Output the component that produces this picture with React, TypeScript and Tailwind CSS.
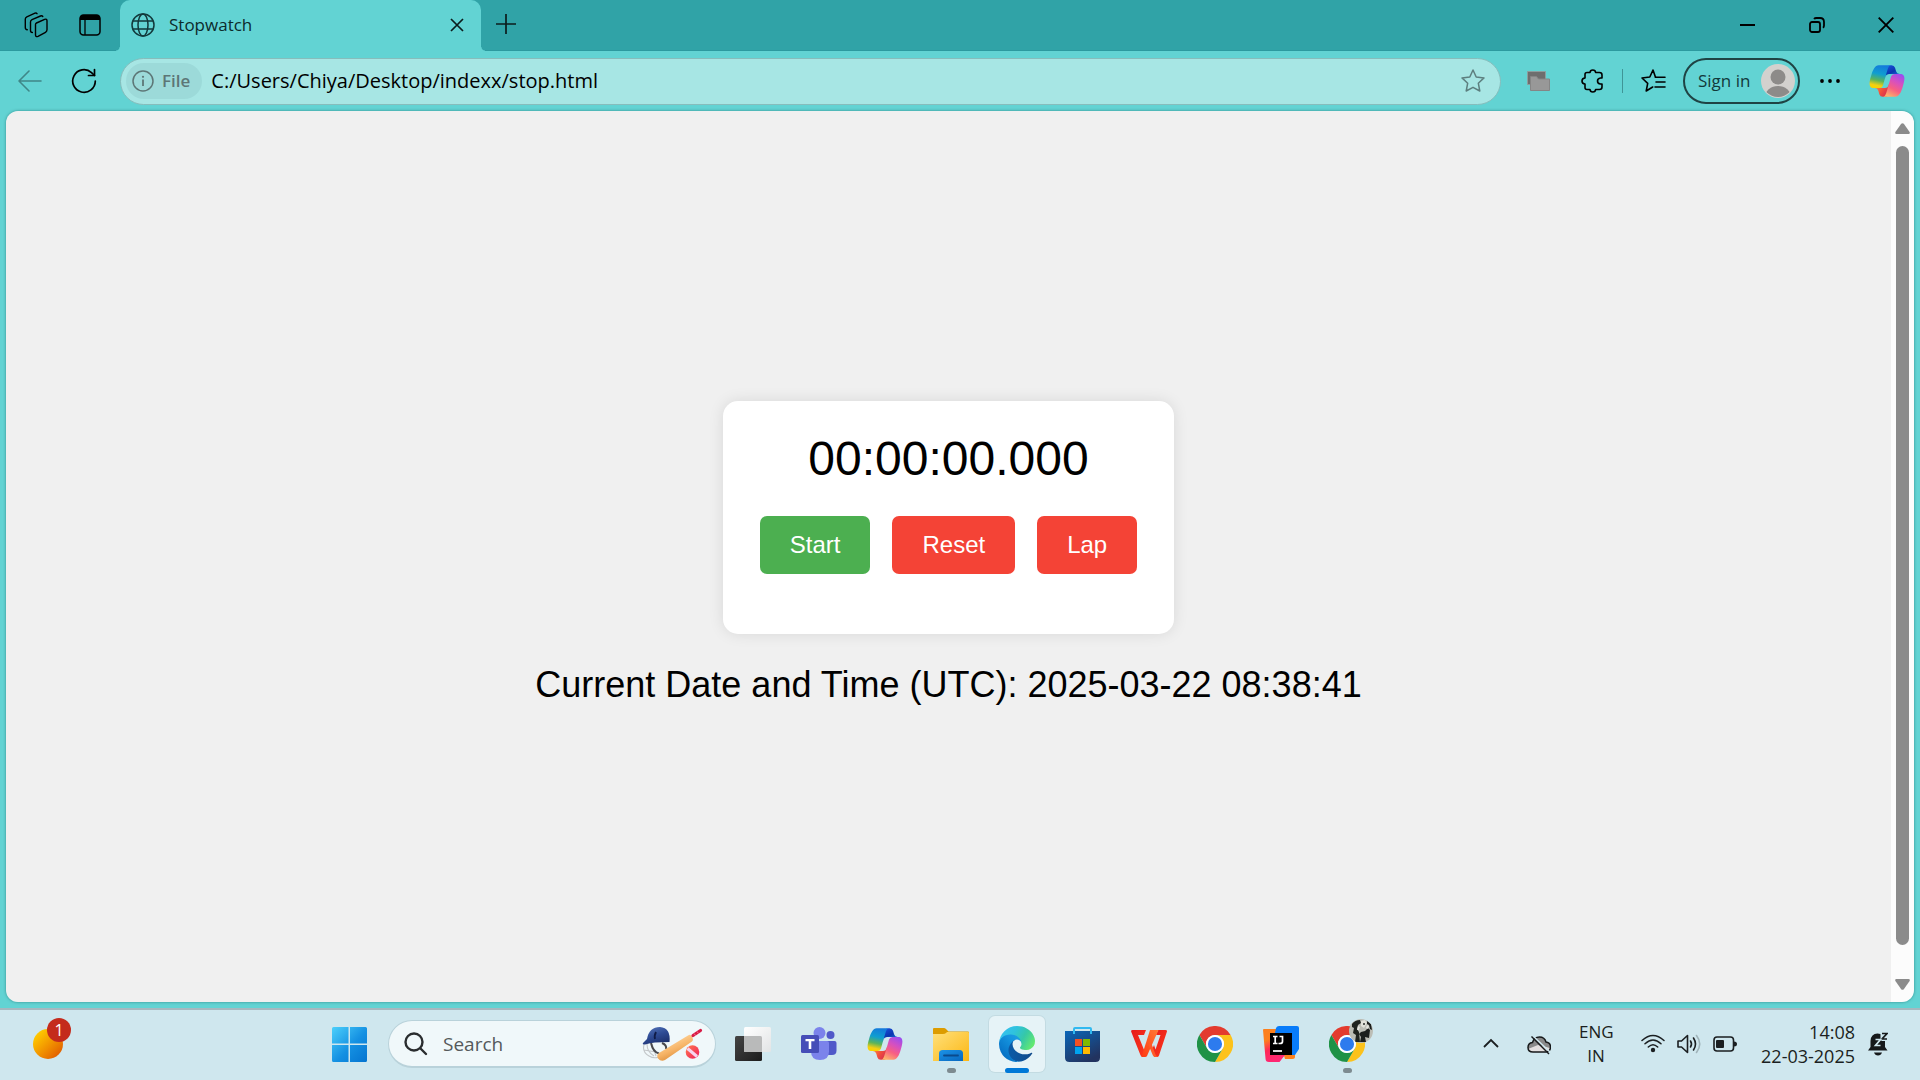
import type { ReactNode } from "react";

const UI_FONT = "font-['Open_Sans','Noto_Sans',sans-serif]";

function CopilotIcon({ id }: { id: string }) {
  return (
    <svg width="38" height="38" viewBox="0 0 48 48" aria-hidden="true">
      <defs>
        <linearGradient id={id + "a"} x1="0.2" y1="0" x2="0.8" y2="1">
          <stop offset="0" stopColor="#1b4fd8" />
          <stop offset="0.5" stopColor="#0a35b0" />
          <stop offset="1" stopColor="#1b7fe6" />
        </linearGradient>
        <linearGradient id={id + "b"} x1="0" y1="0" x2="1" y2="0.6">
          <stop offset="0" stopColor="#ffa43a" />
          <stop offset="0.6" stopColor="#f2503c" />
          <stop offset="1" stopColor="#d9304f" />
        </linearGradient>
        <linearGradient id={id + "c"} x1="0.6" y1="0" x2="0.4" y2="1">
          <stop offset="0" stopColor="#1478dc" />
          <stop offset="0.4" stopColor="#0f9ed0" />
          <stop offset="0.68" stopColor="#5bb45a" />
          <stop offset="0.9" stopColor="#f5cf12" />
          <stop offset="1" stopColor="#f8d400" />
        </linearGradient>
        <linearGradient id={id + "d"} x1="0.8" y1="0" x2="0.3" y2="1">
          <stop offset="0" stopColor="#9a4df0" />
          <stop offset="0.35" stopColor="#d650c0" />
          <stop offset="0.65" stopColor="#f85f82" />
          <stop offset="1" stopColor="#fdb46a" />
        </linearGradient>
      </defs>
      <path fill={`url(#${id}a)`} d="M34.142 7.325A4.63 4.63 0 0 0 29.7 4h-1.35a4.63 4.63 0 0 0-4.554 3.794L21.48 20.407l.575-1.965a4.63 4.63 0 0 1 4.444-3.33h7.853l3.294 1.282 3.175-1.283h-.926a4.63 4.63 0 0 1-4.443-3.325l-1.31-4.461Z" />
      <path fill={`url(#${id}b)`} d="M14.33 40.656A4.63 4.63 0 0 0 18.779 44h2.87a4.63 4.63 0 0 0 4.629-4.51l.312-12.163-.654 2.233a4.63 4.63 0 0 1-4.443 3.329h-7.919l-2.823-1.531-3.057 1.531h.912a4.63 4.63 0 0 1 4.447 3.344l1.279 4.423Z" />
      <path fill={`url(#${id}c)`} d="M29.5 4H13.46c-4.583 0-7.332 6.057-9.165 12.113C2.123 23.29-.72 32.885 7.503 32.885h6.925a4.63 4.63 0 0 0 4.456-3.358 2078.617 2078.617 0 0 1 4.971-17.156c.843-2.843 1.544-5.284 2.621-6.805C27.08 4.714 28.086 4 29.5 4Z" />
      <path fill={`url(#${id}d)`} d="M18.498 44h16.04c4.582 0 7.332-6.058 9.165-12.115 2.171-7.177 5.013-16.775-3.208-16.775h-6.926a4.63 4.63 0 0 0-4.455 3.358 2084.036 2084.036 0 0 1-4.972 17.16c-.842 2.843-1.544 5.285-2.62 6.806-.604.852-1.61 1.566-3.024 1.566Z" />
    </svg>
  );
}

function ChromeIcon() {
  return (
    <svg width="36" height="36" viewBox="0 0 48 48" aria-hidden="true">
      <path fill="#e33b2e" d="M24 12h20.8A24 24 0 0 0 3.2 12l10.4 18A12 12 0 0 1 24 12Z" />
      <path fill="#fcc21b" d="M44.8 12A24 24 0 0 1 24 48l10.4-18A12 12 0 0 0 24 12Z" />
      <path fill="#1f9246" d="M3.2 12A24 24 0 0 0 24 48l10.4-18a12 12 0 0 1-20.8 0Z" />
      <circle cx="24" cy="24" r="12" fill="#fff" />
      <circle cx="24" cy="24" r="9.4" fill="#2d7bee" />
    </svg>
  );
}

function EdgeIcon() {
  return (
    <svg width="36" height="36" viewBox="0 0 256 256" aria-hidden="true">
      <defs>
        <linearGradient id="edgeA" x1="0.2" y1="0.5" x2="1" y2="0.5">
          <stop offset="0" stopColor="#0c59a4" />
          <stop offset="1" stopColor="#114a8b" />
        </linearGradient>
        <linearGradient id="edgeB" x1="0.9" y1="0.2" x2="0.3" y2="0.9">
          <stop offset="0" stopColor="#1b9de2" />
          <stop offset="0.3" stopColor="#1595df" />
          <stop offset="1" stopColor="#0670c4" />
        </linearGradient>
        <linearGradient id="edgeC" x1="0" y1="0.3" x2="1" y2="0.7">
          <stop offset="0" stopColor="#35c1f1" />
          <stop offset="0.35" stopColor="#2fc2dd" />
          <stop offset="0.65" stopColor="#36c8a6" />
          <stop offset="1" stopColor="#66eb6e" />
        </linearGradient>
      </defs>
      <g transform="translate(-4.63 -4.92)">
        <path fill="url(#edgeA)" d="M235.68 195.46a93.73 93.73 0 0 1-10.54 4.71 101.87 101.87 0 0 1-35.9 6.46c-47.32 0-88.54-32.55-88.54-74.32A31.48 31.48 0 0 1 117.13 105c-42.8 1.8-53.8 46.4-53.8 72.53 0 73.88 68.09 81.37 82.76 81.37 7.91 0 19.84-2.3 27-4.56l1.31-.44a128.34 128.34 0 0 0 66.6-52.8 4 4 0 0 0-5.32-5.64Z" />
        <path fill="url(#edgeB)" d="M110.34 246.34A79.2 79.2 0 0 1 87.6 225a80.72 80.72 0 0 1 29.53-120c3.12-1.47 8.45-4.13 15.54-4a32.35 32.35 0 0 1 25.69 13 31.88 31.88 0 0 1 6.36 18.66c0-.21 24.46-79.6-80-79.6-43.9 0-80 41.66-80 78.21a130.15 130.15 0 0 0 12.11 56 128 128 0 0 0 156.38 67.11 75.55 75.55 0 0 1-62.78-8Z" />
        <path fill="url(#edgeC)" d="M156.94 153.78c-.81 1.05-3.3 2.5-3.3 5.66 0 2.61 1.7 5.12 4.72 7.23 14.38 10 41.49 8.68 41.56 8.68a59.56 59.56 0 0 0 30.27-8.35A61.38 61.38 0 0 0 260.63 114c.26-22.41-8-37.31-11.34-43.91C228.1 28.76 182.35 4.92 132.63 4.92a128 128 0 0 0-128 126.18c.48-36.54 36.8-66.05 80-66.05 3.5 0 23.46.34 42 10.07 16.34 8.58 24.9 18.94 30.85 29.21 6.18 10.67 7.28 24.15 7.28 29.52s-2.74 13.33-7.82 19.93Z" />
      </g>
    </svg>
  );
}

function TabBar() {
  return (
    <header className="flex h-[51px] shrink-0 items-center bg-[#30a3a7] pl-3 shadow-[inset_0_-1px_0_#2c9a9f]">
      <button aria-label="Workspaces" className="flex h-full w-12 items-center justify-center pb-0.5">
        <svg width="26" height="26" viewBox="0 0 26 26" fill="none" stroke="#000" strokeWidth="1.4" strokeLinejoin="round" strokeLinecap="round" aria-hidden="true">
          <path d="M12.500 12.500q0-1 1-1.500L21.600 7.400q2.400-.900 2.400 1.400v9q0 1.700-1.500 2.500l-7.500 4q-2.500 1-2.500-1.500Z" />
          <path d="M9.400 20.500Q7.500 20.500 7.500 18.500V10q0-1.600 1.500-2.300l8.500-3.700q1.500-.600 2.300.5" />
          <path d="M4.300 17.800Q2.300 17.600 2.300 15.500V7q0-1.500 1.500-2.200l8.200-3.600q1.300-.500 2 .5" />
        </svg>
      </button>
      <button aria-label="Tab actions" className="ml-1.5 flex h-full w-12 items-center justify-center pb-0.5">
        <svg width="22" height="22" viewBox="0 0 22 22" fill="none" aria-hidden="true">
          <rect x="1" y="1" width="20" height="20" rx="3.500" stroke="#000" strokeWidth="1.500" />
          <path d="M1 6V4a3 3 0 0 1 3-3h14a3 3 0 0 1 3 3v2Z" fill="#000" />
          <path d="M6 6v15" stroke="#000" strokeWidth="1.300" />
        </svg>
      </button>
      <div className="relative ml-1.5 flex h-full w-[361px] items-center rounded-t-[10px] bg-[#62d3d3] pr-3 pb-0.5 pl-[11px]">
        <span className="absolute bottom-0 -left-1 size-1 bg-[radial-gradient(circle_at_0_0,#30a3a7_3px,#62d3d3_4px)]" />
        <span className="absolute -right-1 bottom-0 size-1 bg-[radial-gradient(circle_at_100%_0,#30a3a7_3px,#62d3d3_4px)]" />
        <svg width="24" height="24" viewBox="0 0 24 24" fill="none" stroke="#12393b" strokeWidth="1.500" aria-hidden="true">
          <circle cx="12" cy="12" r="11" />
          <ellipse cx="12" cy="12" rx="5" ry="11" />
          <path d="M2 8h20M2 16h20" />
        </svg>
        <span className="ml-3.5 text-[17px] leading-6 text-[#0c2b2c]">Stopwatch</span>
        <button aria-label="Close tab" className="ml-auto flex size-6 items-center justify-center">
          <svg width="14" height="14" viewBox="0 0 14 14" stroke="#0b1c1c" strokeWidth="1.700" aria-hidden="true">
            <path d="m1 1 12 12M13 1 1 13" />
          </svg>
        </button>
      </div>
      <button aria-label="New tab" className="ml-[5px] flex h-full w-10 items-center justify-center pb-1">
        <svg width="22" height="22" viewBox="0 0 22 22" stroke="#0b1c1c" strokeWidth="1.700" aria-hidden="true">
          <path d="M11 1v20M1 11h20" />
        </svg>
      </button>
      <div className="ml-auto flex h-full pb-0.5">
        <button aria-label="Minimize" className="flex w-[69px] items-center justify-center">
          <svg width="15" height="15" viewBox="0 0 15 15" aria-hidden="true"><path d="M0 7h15v2H0Z" /></svg>
        </button>
        <button aria-label="Restore" className="flex w-[69px] items-center justify-center">
          <svg width="16" height="16" viewBox="0 0 16 16" fill="none" stroke="#000" strokeWidth="1.800" aria-hidden="true">
            <rect x="1" y="5" width="10" height="10" rx="2" />
            <path d="M5 2q.8-1 2.300-1H11q4 0 4 4v3.500q0 1.500-1 2.300" />
          </svg>
        </button>
        <button aria-label="Close" className="flex w-[69px] items-center justify-center">
          <svg width="16" height="16" viewBox="0 0 16 16" stroke="#000" strokeWidth="1.900" aria-hidden="true">
            <path d="m.7.700 14.600 14.600M15.300.700.7 15.300" />
          </svg>
        </button>
      </div>
    </header>
  );
}

function ToolButton({ label, children }: { label: string; children: ReactNode }) {
  return (
    <button aria-label={label} className="flex size-12 shrink-0 items-center justify-center">
      {children}
    </button>
  );
}

function Toolbar() {
  return (
    <nav className="flex h-[60px] shrink-0 items-center gap-1.5 bg-[#62d3d3] pr-[9px] pl-1.5">
      <ToolButton label="Back">
        <svg width="24" height="22" viewBox="0 0 24 22" fill="none" stroke="#3f8788" strokeWidth="1.600" strokeLinecap="round" strokeLinejoin="round" aria-hidden="true">
          <path d="M23 11H1M11 1 1 11l10 10" />
        </svg>
      </ToolButton>
      <ToolButton label="Refresh">
        <svg width="26" height="26" viewBox="0 0 26 26" fill="none" stroke="#000" strokeWidth="1.700" strokeLinecap="round" strokeLinejoin="round" aria-hidden="true">
          <path d="M24.300 13A11.300 11.300 0 1 1 20.500 4.600L23.500 7.500" />
          <path d="M23.500 1.500v6h-6" />
        </svg>
      </ToolButton>
      <div className="mr-[7px] ml-1.5 flex h-[47px] min-w-0 flex-1 items-center rounded-full border border-[#86bdbc] bg-[#a7e6e4] pr-[15px] pl-[5px]">
        <button className="flex h-9 shrink-0 items-center gap-2 rounded-full bg-[#9cdad9] pr-3 pl-1.5 text-[#5d7676]">
          <svg width="22" height="22" viewBox="0 0 22 22" fill="none" stroke="#5d7676" strokeWidth="1.500" aria-hidden="true">
            <circle cx="11" cy="11" r="10" />
            <path d="M11 9.500V16" strokeWidth="1.800" />
            <circle cx="11" cy="6.800" r="1.100" fill="#5d7676" stroke="none" />
          </svg>
          <span className="text-[17px] leading-6 font-semibold">File</span>
        </button>
        <input aria-label="Address" defaultValue="C:/Users/Chiya/Desktop/indexx/stop.html" className="ml-[9px] min-w-0 flex-1 bg-transparent text-[20px] leading-7 text-black outline-none" />
        <button aria-label="Add to favorites" className="shrink-0">
          <svg width="24" height="24" viewBox="0 0 24 24" fill="none" stroke="#5d7f7f" strokeWidth="1.500" strokeLinejoin="round" aria-hidden="true">
            <path d="m12 1 3.200 7 7.800.900-5.700 5.300 1.500 7.800L12 18.300 5.200 22l1.500-7.800L1 8.900 8.800 8Z" />
          </svg>
        </button>
      </div>
      <ToolButton label="Extension">
        <svg width="23" height="20" viewBox="0 0 23 20" aria-hidden="true">
          <path d="M.500.500h18v13H.500Z" fill="#6e6e6e" stroke="#8d9d9d" />
          <path d="M3.500 5.500h6l2 2.500h11v11.500h-19Z" fill="#989898" stroke="#858585" />
        </svg>
      </ToolButton>
      <ToolButton label="Extensions">
        <svg width="22" height="24" viewBox="0 0 22 24" fill="none" stroke="#000" strokeWidth="1.600" strokeLinejoin="round" aria-hidden="true">
          <path d="M6 3.500h3Q9.200 1 11.800 1t2.800 2.500h3.900Q21 3.500 21 6v3h-1.500q-3 .3-3 3t3 3H21v3q0 2.500-2.500 2.500h-3.900Q14.400 23 11.800 23T9 20.500H6q-2 0-2-2V15q-3-.200-3-3t3-3V5.500q0-2 2-2Z" />
        </svg>
      </ToolButton>
      <span className="h-6 w-px bg-[#3f9597]" />
      <ToolButton label="Favorites">
        <svg width="25" height="24" viewBox="0 0 25 24" fill="none" stroke="#000" strokeWidth="1.600" strokeLinejoin="round" strokeLinecap="round" aria-hidden="true">
          <path d="M14.500 8.200 12 1 8.800 8 1 9l5.700 5.300L5.200 22l6.500-4" />
          <path d="M14.500 8.200h9.500M15 13h9M14 18h10" />
        </svg>
      </ToolButton>
      <button className="flex h-[46px] w-[117px] shrink-0 items-center justify-between rounded-full border-2 border-[#1f4344] pr-[3px] pl-[13px]">
        <span className="text-[17px] leading-6 text-[#12393b]">Sign in</span>
        <svg width="34" height="34" viewBox="0 0 34 34" aria-hidden="true">
          <clipPath id="avatarClip"><circle cx="17" cy="17" r="16" /></clipPath>
          <circle cx="17" cy="17" r="17" fill="#d3d1ce" />
          <g fill="#8d8b89" clipPath="url(#avatarClip)">
            <circle cx="17" cy="13" r="7.500" />
            <ellipse cx="17" cy="33" rx="13" ry="11" />
          </g>
        </svg>
      </button>
      <ToolButton label="Settings and more">
        <svg width="20" height="6" viewBox="0 0 20 6" aria-hidden="true">
          <circle cx="2" cy="3" r="1.900" /><circle cx="10" cy="3" r="1.900" /><circle cx="18" cy="3" r="1.900" />
        </svg>
      </ToolButton>
      <button aria-label="Copilot" className="ml-[3px] flex size-12 shrink-0 items-center justify-center">
        <CopilotIcon id="cpTop" />
      </button>
    </nav>
  );
}

function StopwatchPage() {
  return (
    <main className="flex flex-1 flex-col items-center justify-center bg-[#f0f0f0] pb-[7px] font-['Liberation_Sans',Arial,sans-serif] text-black">
      <section className="rounded-[15px] bg-white px-[37px] pt-[30px] pb-[60px] text-center shadow-[0_0_15px_rgba(0,0,0,0.1)]">
        <div className="mb-[30px] text-[48px] leading-[55px]">00:00:00.000</div>
        <div className="flex gap-[22px] text-[24px] leading-7 text-white">
          <button className="rounded-[7px] bg-[#4caf50] px-[30px] py-[15px]">Start</button>
          <button className="rounded-[7px] bg-[#f44336] px-[30px] py-[15px]">Reset</button>
          <button className="rounded-[7px] bg-[#f44336] px-[30px] py-[15px]">Lap</button>
        </div>
      </section>
      <p className="mt-[30px] text-[36px] leading-[41px]">Current Date and Time (UTC): 2025-03-22 08:38:41</p>
    </main>
  );
}

function ScrollBar() {
  return (
    <div className="flex w-[23px] shrink-0 flex-col items-center bg-[#fcfcfc] pt-3 pb-3">
      <svg width="15" height="11" viewBox="0 0 15 11" fill="#8b8b8b" aria-hidden="true">
        <path d="M6.200.800q1.300-1.300 2.600 0l5.800 8.200q.800 2-1.100 2h-12q-1.900 0-1.100-2Z" />
      </svg>
      <div className="mt-3 mb-[34px] w-[13px] flex-1 rounded-full bg-[#8b8b8b]" />
      <svg width="15" height="11" viewBox="0 0 15 11" fill="#8b8b8b" aria-hidden="true">
        <path d="M6.200 10.200q1.300 1.300 2.600 0L14.600 2q.800-2-1.100-2h-12Q-.400 0 .400 2Z" />
      </svg>
    </div>
  );
}

function CricketArt() {
  return (
    <svg width="62" height="36" viewBox="0 0 62 36" fill="none" aria-hidden="true">
      <defs>
        <linearGradient id="helmet" x1="0.2" y1="0" x2="0.7" y2="1">
          <stop offset="0" stopColor="#5272b8" /><stop offset="0.5" stopColor="#2d4a93" /><stop offset="1" stopColor="#1c2f6b" />
        </linearGradient>
        <linearGradient id="bat" x1="0.3" y1="0.2" x2="0.7" y2="0.9">
          <stop offset="0" stopColor="#ffd49a" /><stop offset="0.5" stopColor="#f6b467" /><stop offset="1" stopColor="#d98834" />
        </linearGradient>
        <linearGradient id="ball" x1="0" y1="0" x2="1" y2="1">
          <stop offset="0" stopColor="#ff7a4a" /><stop offset="1" stopColor="#ee1c62" />
        </linearGradient>
      </defs>
      <path d="M2 19q-2 7 5 11 5 3 10 1M5 18q0 8 7 12M2 24l12 2M10 18l4 12" stroke="#c3c7c9" strokeWidth="1.100" />
      <path d="M9 17q2 9 8 10.500M20 17q5 2 4 6" stroke="#48484c" strokeWidth="2" />
      <path d="M5 13Q7 1 18 1q11 1 9.500 15L13 16.500Q8 17 3 18.500q-3 0-2-1.500Z" fill="url(#helmet)" />
      <path d="M14 6q-2 4-1 7" stroke="#101c48" strokeWidth="1.800" />
      <path d="M17 27 46 9.500q2-1.500 3 0l1.500 2q1 2-.5 4L23 34q-4 2-7-1.500-2-3.500 1-5.500Z" fill="url(#bat)" />
      <path d="m51 9.500 7.500-5" stroke="#d81b45" strokeWidth="3.200" strokeLinecap="round" />
      <path d="m52 7.500 2 2.500M55 5.500l1.500 2" stroke="#f58aa0" strokeWidth=".8" />
      <circle cx="50.500" cy="26" r="6.800" fill="url(#ball)" />
      <path d="m45.500 22.500 9.500 8" stroke="#f8d5f0" strokeWidth="3" />
    </svg>
  );
}

function AppTile({ label, active, running, children }: { label: string; active?: boolean; running?: boolean; children: ReactNode }) {
  return (
    <button
      aria-label={label}
      className={
        active
          ? "relative flex size-14 shrink-0 items-center justify-center rounded-md bg-[#e6f3f7] shadow-[0_0_0_1px_#c3dbe2]"
          : "relative flex size-14 shrink-0 items-center justify-center rounded-md"
      }
    >
      {children}
      {active && <span className="absolute -bottom-px h-[5px] w-6 rounded-full bg-[#0078d7]" />}
      {running && <span className="absolute -bottom-px h-[5px] w-[9px] rounded-full bg-[#7d8b90]" />}
    </button>
  );
}

function Taskbar() {
  return (
    <footer className="flex h-[72px] shrink-0 items-center border-t-2 border-[#a5b8bf] bg-[#cfe7ee] pr-8 pb-0.5 text-[#1b1f21]">
      <div className="w-[321px] shrink-0 pl-[33px]">
        <button aria-label="Widgets, 1 notification" className="relative block size-[30px] rounded-full bg-linear-to-br from-[#ffd000] from-10% to-[#e05a00] to-90%">
          <span className="absolute -top-[11px] left-3.5 flex size-6 items-center justify-center rounded-full bg-[#c42b1c] text-[16px] leading-5 text-white">1</span>
        </button>
      </div>
      <div className="flex shrink-0 items-center gap-2.5">
        <AppTile label="Start">
          <svg width="35" height="35" viewBox="0 0 35 35" aria-hidden="true">
            <defs>
              <linearGradient id="win" gradientUnits="userSpaceOnUse" x1="0" y1="0" x2="35" y2="35">
                <stop offset="0" stopColor="#4cd0fb" /><stop offset="0.550" stopColor="#1490e2" /><stop offset="1" stopColor="#0474d0" />
              </linearGradient>
            </defs>
            <path fill="url(#win)" d="M1.500 0H16.500v16.500H0V1.500Q0 0 1.500 0ZM18 0h15.500Q35 0 35 1.500v15H18ZM0 18h16.500v17H1.500Q0 35 0 33.500ZM18 18h17v15.500q0 1.500-1.500 1.500H18Z" />
          </svg>
        </AppTile>
        <label className="ml-px flex h-12 w-[328px] shrink-0 items-center rounded-full border border-b-2 border-[#b9d2da] bg-[#f0f8fa] pr-[11px] pl-[15px]">
          <svg width="24" height="24" viewBox="0 0 24 24" fill="none" stroke="#2a2d2f" strokeWidth="2.400" strokeLinecap="round" aria-hidden="true">
            <circle cx="10" cy="10" r="8.500" />
            <path d="m16.500 16.500 5.500 5.500" />
          </svg>
          <input aria-label="Search" placeholder="Search" className="ml-[15px] min-w-0 flex-1 bg-transparent text-[19px] leading-7 text-[#55595b] outline-none placeholder:text-[#55595b]" />
          <CricketArt />
        </label>
        <div className="-ml-px flex gap-2.5">
          <AppTile label="Task view">
            <svg width="36" height="36" viewBox="0 0 36 36" aria-hidden="true">
              <defs>
                <linearGradient id="tvDark" x1="0" y1="0" x2="1" y2="1"><stop offset="0" stopColor="#444" /><stop offset="1" stopColor="#1c1c1c" /></linearGradient>
                <linearGradient id="tvLight" x1="0" y1="0" x2="1" y2="1"><stop offset="0" stopColor="#fff" /><stop offset="1" stopColor="#e2e4e5" /></linearGradient>
              </defs>
              <rect x="0" y="10" width="27" height="25" rx="1.500" fill="url(#tvDark)" />
              <rect x="9" y="1" width="27" height="25" rx="1.500" fill="url(#tvLight)" />
              <path d="M9 10h16.500q1.500 0 1.500 1.500V26H10q-1 0-1-1Z" fill="#b9baba" />
            </svg>
          </AppTile>
          <AppTile label="Teams">
            <svg width="36" height="34" viewBox="0 0 36 34" aria-hidden="true">
              <circle cx="29.500" cy="8" r="4" fill="#5059c9" />
              <path d="M24 14h9.500q2 0 2 2v7.500q0 4.500-4.500 4.500h-5Z" fill="#5059c9" />
              <circle cx="18.500" cy="6" r="6" fill="#7b83eb" />
              <path d="M10 14h16q2 0 2 2v8.500q0 8.500-9 8.500t-9-8.500Z" fill="#7b83eb" />
              <rect x="0" y="8" width="18" height="18" rx="1.500" fill="#464eb8" />
              <path d="M4.500 12h9v2.300h-3.200V22H7.700v-7.700H4.500Z" fill="#fff" />
            </svg>
          </AppTile>
          <AppTile label="Copilot"><CopilotIcon id="cpTask" /></AppTile>
          <AppTile label="File Explorer" running>
            <svg width="36" height="33" viewBox="0 0 36 33" aria-hidden="true">
              <defs>
                <linearGradient id="fold" x1="0" y1="0" x2="1" y2="1"><stop offset="0" stopColor="#ffe07a" /><stop offset="1" stopColor="#fcb714" /></linearGradient>
                <linearGradient id="foldB" x1="0" y1="0" x2="1" y2="1"><stop offset="0" stopColor="#1c93e6" /><stop offset="1" stopColor="#0868c0" /></linearGradient>
              </defs>
              <path d="M0 1q0-1 1-1h10q1 0 2 1l2.500 2.500H35q1 0 1 1V10H0Z" fill="#dd9c00" />
              <path d="M0 6h10q2 0 3-1l1-1h21q1 0 1 1v28H0Z" fill="url(#fold)" />
              <path d="M6 33v-7.500q0-3.500 3.500-3.500h17q3.500 0 3.500 3.500V33Z" fill="url(#foldB)" />
              <path d="M11 27.500h14" stroke="#0b4a8c" strokeWidth="1.800" strokeLinecap="round" />
            </svg>
          </AppTile>
          <AppTile label="Microsoft Edge" active><EdgeIcon /></AppTile>
          <AppTile label="Microsoft Store">
            <svg width="36" height="36" viewBox="0 0 36 36" aria-hidden="true">
              <defs>
                <linearGradient id="store" x1="0" y1="0" x2="0.600" y2="1"><stop offset="0" stopColor="#0a66b8" /><stop offset="1" stopColor="#22335f" /></linearGradient>
              </defs>
              <path d="M0 5h35v26.500q0 4.500-4.500 4.500h-26Q0 36 0 31.500Z" fill="url(#store)" />
              <path d="M9 8V3q0-1 1-1h15q1 0 1 1v5" fill="none" stroke="#31b9f0" strokeWidth="2" />
              <path fill="#f25022" d="M10 13h7v7h-7Z" /><path fill="#7fba00" d="M18 13h7v7h-7Z" />
              <path fill="#00a4ef" d="M10 21h7v7h-7Z" /><path fill="#ffb900" d="M18 21h7v7h-7Z" />
            </svg>
          </AppTile>
          <AppTile label="WPS Office">
            <svg width="36" height="28" viewBox="0 0 36 28" aria-hidden="true">
              <defs>
                <linearGradient id="wpsA" x1="0" y1="0" x2="1" y2="1"><stop offset="0" stopColor="#e51a1a" /><stop offset="1" stopColor="#ff3a1c" /></linearGradient>
                <linearGradient id="wpsB" x1="1" y1="0" x2="0" y2="1"><stop offset="0" stopColor="#ff7a35" /><stop offset="1" stopColor="#ff3a12" /></linearGradient>
              </defs>
              <path d="M27 0h7.500q2 0 1.300 2L28 25.500q-.700 1.500-2 1.500h-2.500L21 20l2-5 1.500 4.500L29.500 5H25Z" fill="url(#wpsA)" />
              <path d="M1.500 0H15l-2 5H7l5.500 13.500L14 22l-1 5h-1.500q-1.200 0-2-1.800L.300 2Q-.400 0 1.500 0Z" fill="url(#wpsA)" />
              <path d="M19 0h8.500L16 26q-.500 1-1.800 1H10.500Z" fill="url(#wpsB)" />
              <path d="m19.500 11 5 13.500q.800 2.500 3.300 1L25.500 27H24q-1.500 0-2.200-1.800L17.500 15Z" fill="#ff5a28" />
            </svg>
          </AppTile>
          <AppTile label="Google Chrome"><ChromeIcon /></AppTile>
          <AppTile label="IntelliJ IDEA">
            <svg width="36" height="36" viewBox="0 0 36 36" aria-hidden="true">
              <defs>
                <linearGradient id="ijL" x1="0" y1="0" x2="0.300" y2="1"><stop offset="0" stopColor="#fc801d" /><stop offset="0.350" stopColor="#fc801d" /><stop offset="0.650" stopColor="#fe2857" /><stop offset="1" stopColor="#fe2872" /></linearGradient>
              </defs>
              <path d="M20 26h12v4.500q0 2.500-2.500 2.500H22Z" fill="#fc801d" />
              <path d="M0 4q0-1 1-1h12v25l9 1-5.500 7H6q-3.500 0-3.500-3.500Z" fill="url(#ijL)" />
              <path d="M13 2q1-2 3-2h18q2 0 2 2v21l-4 6H18L12 7Z" fill="#087cfa" />
              <path d="M7 7h22v22H7Z" />
              <path d="M10 10.500h4.500M12.200 10.500v7M10 17.500h4.500M16.500 10.500h3v5q0 2-2.500 2h-1.500" fill="none" stroke="#fff" strokeWidth="1.700" />
              <path d="M10 25h9" stroke="#fff" strokeWidth="1.700" />
            </svg>
          </AppTile>
          <AppTile label="Google Chrome, profile" running>
            <ChromeIcon />
            <svg className="absolute top-[3px] right-0.5" width="24" height="24" viewBox="0 0 24 24" aria-hidden="true">
              <clipPath id="photoClip"><circle cx="12" cy="12" r="12" /></clipPath>
              <g clipPath="url(#photoClip)">
                <path fill="#bcbdb5" d="M0 0h24v24H0Z" />
                <path fill="#20231f" d="M3 5q3-4 8-4l1 3-3 2-1 4 2 3 1 10H6l1-7-3-2 1-5-2-1Z" />
                <path fill="#e2e2da" d="M12 2l4-1 2 3-3 5-3-2Z" />
                <path fill="#1c1e1c" d="M18 2l4 3 1 6-2-1-1-4-2-1ZM12 13l4-1 3-3 2 2-1 8-4-1 1 5h-6l1-5-2-3Z" />
                <path fill="#e4e4de" d="M9 7l2 1-1 3h-2ZM18 6l2 1-1 3-2-1Z" />
                <circle cx="15" cy="5" r="1" fill="#2a2c2a" />
              </g>
            </svg>
          </AppTile>
        </div>
      </div>
      <div className="ml-auto flex shrink-0 items-center text-[18px] leading-6">
        <button aria-label="Show hidden icons">
          <svg width="16" height="24" viewBox="0 0 16 24" fill="none" stroke="#1b1f21" strokeWidth="1.800" aria-hidden="true"><path d="m1 15 7-7 7 7" /></svg>
        </button>
        <button aria-label="OneDrive" className="ml-7">
          <svg width="24" height="24" viewBox="0 0 24 24" fill="none" aria-hidden="true">
            <path d="M6 20q-5 0-5-4.500Q1 11 5.500 10.500 7 5 12.500 5q5 0 6.500 5 4.500.500 4.500 5t-4.500 5Z" fill="#8a8a8a" />
            <path d="M5 20q-3 0-4-3l10-4 12 3q-.500 4-4.500 4Z" fill="#e4e0e0" />
            <path d="M6 20q-5 0-5-4.500Q1 11 5.500 10.500 7 5 12.500 5q5 0 6.500 5 4.500.500 4.500 5t-4.500 5Z" stroke="#17191a" strokeWidth="1.500" />
            <path d="m6 4 17 16" stroke="#cfe7ee" strokeWidth="1.500" />
            <path d="m4.500 4.500 17.500 17.500" stroke="#17191a" strokeWidth="1.500" />
          </svg>
        </button>
        <button className="ml-7 w-[34px] text-center text-[17px]">
          <span className="block">ENG</span>
          <span className="block">IN</span>
        </button>
        <button aria-label="Network, volume and battery" className="ml-7 flex gap-3">
          <svg width="24" height="24" viewBox="0 0 24 24" fill="none" stroke="#1b1f21" strokeWidth="1.500" strokeLinecap="round" aria-hidden="true">
            <path d="M1 8.500q11-10 22 0M4 11.800q8-7.500 16 0M7.300 15q4.700-4.500 9.400 0" />
            <circle cx="12" cy="18" r="2.200" fill="#1b1f21" stroke="none" />
          </svg>
          <svg width="24" height="24" viewBox="0 0 24 24" fill="none" stroke="#1b1f21" strokeWidth="1.600" strokeLinecap="round" strokeLinejoin="round" aria-hidden="true">
            <path d="M1 9h3.500l6-5.500v17L4.500 15H1ZM13.500 9q2 3 0 6M16.500 6q4 6 0 12" />
            <path d="M19.500 3.500q6.500 8.500 0 17" stroke="#9fb3b9" />
          </svg>
          <svg width="24" height="24" viewBox="0 0 24 24" aria-hidden="true">
            <rect x="1" y="5" width="19.500" height="14" rx="3" fill="none" stroke="#1b1f21" strokeWidth="1.600" />
            <rect x="3" y="8" width="8" height="8" rx="1" fill="#1b1f21" />
            <path d="M21 9.500q3 0 3 2.500t-3 2.500Z" fill="#1b1f21" />
          </svg>
        </button>
        <button className="ml-6 text-right">
          <span className="block">14:08</span>
          <span className="block">22-03-2025</span>
        </button>
        <button aria-label="Do not disturb" className="ml-[13px]">
          <svg width="20" height="24" viewBox="0 0 20 24" aria-hidden="true">
            <path d="M2.500 15V9Q3 1.500 9.500 1.500T17 9v6l2.500 3.500H0Z" fill="#16191a" />
            <path d="M6 20.500h8q-1 3-4 3t-4-3Z" fill="#16191a" />
            <path d="M12.500 0H20v9h-6l-1.500-1Z" fill="#cfe7ee" />
            <path d="M14 1.500h5l-5 5.500h5" fill="none" stroke="#16191a" strokeWidth="1.700" />
            <path d="M7.500 7.500h5l-5 6h5" fill="none" stroke="#cfe7ee" strokeWidth="1.700" />
          </svg>
        </button>
      </div>
    </footer>
  );
}

export default function App() {
  return (
    <div className={`flex h-screen flex-col overflow-hidden bg-[#62d3d3] ${UI_FONT}`}>
      <TabBar />
      <Toolbar />
      <div className="mx-1.5 mb-1.5 flex min-h-0 flex-1 overflow-hidden rounded-xl shadow-[0_0_3px_rgba(0,70,70,0.5)]">
        <StopwatchPage />
        <ScrollBar />
      </div>
      <Taskbar />
    </div>
  );
}
